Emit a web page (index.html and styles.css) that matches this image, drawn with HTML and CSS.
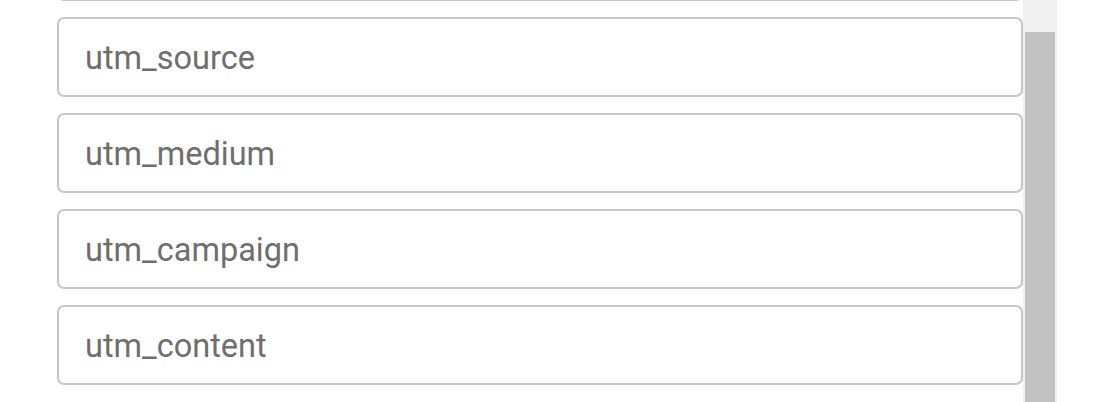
FILE: index.html
```html
<!DOCTYPE html>
<html>
<head>
  <title>UTM Parameters</title>
  <link rel="stylesheet" href="styles.css">
</head>

<body>
  <div class="panel">
    <div class="field-list">
      <input type="text" class="field" placeholder="utm_term">
      <input type="text" class="field" placeholder="utm_source">
      <input type="text" class="field" placeholder="utm_medium">
      <input type="text" class="field" placeholder="utm_campaign">
      <input type="text" class="field" placeholder="utm_content">
    </div>
    <div class="scroll-track">
      <div class="scroll-thumb"></div>
    </div>
  </div>
</body>
</html>
```

FILE: styles.css
```css
html,
body {
  margin: 0;
  height: 100%;
  overflow: hidden;
  background-color: #fff;
  font-family: Roboto, "Liberation Sans", sans-serif;
}

.panel {
  display: flex;
  height: 100%;
  padding-left: 57px;
}

.field-list {
  display: flex;
  flex-direction: column;
  gap: 16px;
  width: 966px;
  margin-top: -79px;
}

.field {
  flex: none;
  box-sizing: border-box;
  height: 80px;
  width: 100%;
  padding: 2px 26px 0 26px;
  border: 2px solid #c6c6c6;
  border-radius: 7px;
  font-family: inherit;
  font-size: 32.5px;
  color: #6e6e6e;
  background-color: #fff;
}

.field::placeholder {
  color: #6e6e6e;
  opacity: 1;
}

.field:focus {
  outline: none;
}

.scroll-track {
  width: 34px;
  height: 100%;
  box-sizing: border-box;
  padding: 32px 2px 0 2px;
  background-color: #f1f1f1;
}

.scroll-thumb {
  height: 100%;
  background-color: #c1c1c1;
}
```
